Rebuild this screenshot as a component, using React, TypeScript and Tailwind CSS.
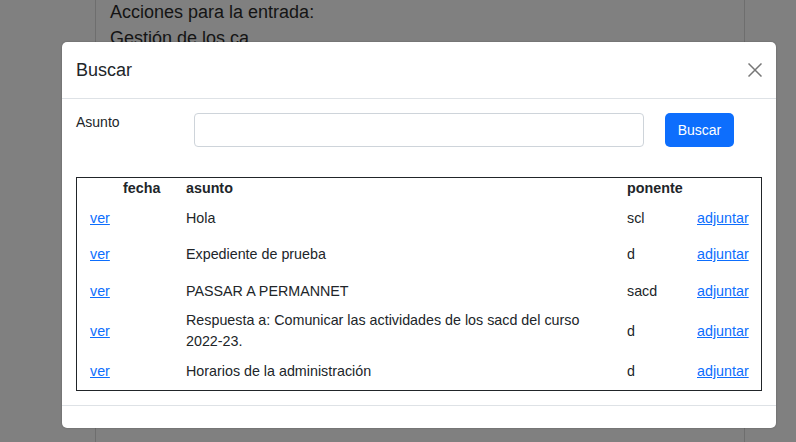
import React from "react";

const rows = [
  { asunto: "Hola", ponente: "scl", h: "h-[36px]" },
  { asunto: "Expediente de prueba", ponente: "d", h: "h-[36px]" },
  { asunto: "PASSAR A PERMANNET", ponente: "sacd", h: "h-[38px]" },
  {
    asunto: "Respuesta a: Comunicar las actividades de los sacd del curso 2022-23.",
    ponente: "d",
    h: "h-[42px]",
  },
  { asunto: "Horarios de la administración", ponente: "d", h: "h-[38px]" },
];

export default function App() {
  return (
    <div
      className="relative w-[796px] h-[442px] overflow-hidden bg-[#808080] text-[#212529]"
      style={{ fontFamily: '"Liberation Sans", Arial, sans-serif' }}
    >
      {/* background page content (under the backdrop) */}
      <div className="absolute left-[95px] top-0 w-[650px] h-full border-x border-[#6e6e6e] pl-[14px] text-[18px] text-[#141414]">
        <div className="mt-[-1px] leading-[26px]">Acciones para la entrada:</div>
        <div className="leading-[27px]">Gestión de los ca</div>
      </div>

      {/* modal */}
      <div className="absolute left-[62px] top-[42px] w-[714px] bg-white rounded-[5px] shadow-[0_0_2px_rgba(0,0,0,0.3)] text-[14px]">
        <div className="h-[57px] flex items-center justify-between pl-[14px] pr-[14px] border-b border-[#dee2e6]">
          <div className="text-[18px] leading-[22px] text-[#212529]">Buscar</div>
          <svg width="14" height="14" viewBox="0 0 14 14" className="mt-[-1px]">
            <path d="M0.5 0.5 L13.5 13.5 M13.5 0.5 L0.5 13.5" stroke="#777" strokeWidth="1.5" fill="none" />
          </svg>
        </div>

        <div className="px-[14px] pt-[14px] pb-[14px]">
          <div className="flex items-start">
            <div className="w-[118px] leading-[21px] mt-[-1px]">Asunto</div>
            <div className="w-[450px] h-[34px] border border-[#ced4da] rounded-[4px]" />
            <div className="ml-[21px] w-[69px] h-[34px] bg-[#0d6efd] rounded-[5px] text-white flex items-center justify-center">
              Buscar
            </div>
          </div>

          <div className="mt-[30px] border border-[#212529] text-[14.3px]">
            <div className="grid grid-cols-[33px_63px_441px_70px_1fr] pl-[13px] h-[22px] items-center font-bold">
              <div />
              <div>fecha</div>
              <div>asunto</div>
              <div>ponente</div>
              <div />
            </div>
            {rows.map((r, i) => (
              <div
                key={i}
                className={`grid grid-cols-[33px_63px_441px_70px_1fr] pl-[13px] ${r.h} items-center leading-[21px]`}
              >
                <a className="text-[#0d6efd] underline">ver</a>
                <div />
                <div className="pr-[40px]">{r.asunto}</div>
                <div>{r.ponente}</div>
                <a className="text-[#0d6efd] underline">adjuntar</a>
              </div>
            ))}
          </div>
        </div>

        <div className="h-[23px] border-t border-[#dee2e6]" />
      </div>
    </div>
  );
}
